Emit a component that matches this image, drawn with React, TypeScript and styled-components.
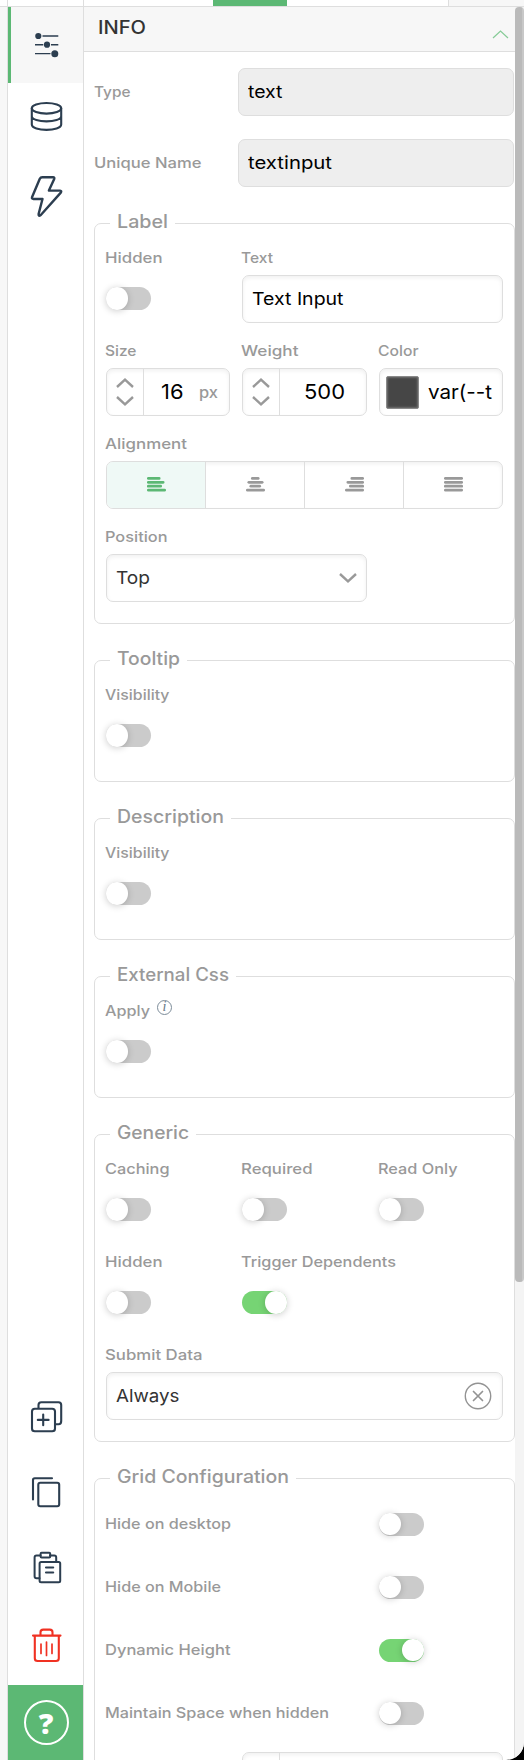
import React, { useLayoutEffect, useRef, useState } from "react";
import styled, { createGlobalStyle } from "styled-components";

const color = {
  line: "#dedede",
  muted: "#999999",
  ink: "#2c3e50",
  green: "#5cb874",
  toggle: "#76d474",
  shade: "#f7f7f7",
  danger: "#f03122",
};

const GlobalStyle = createGlobalStyle`
  *, *::before, *::after { box-sizing: border-box; }
  body { margin: 0; background: #000; font-family: Inter, "Open Sans", sans-serif; }
`;

/* ---------- text ---------- */

const Line = styled.span`
  display: inline-block;
  white-space: pre;
`;

const Glyphs = styled.span`
  display: inline-block;
  transform-origin: left center;
`;

/** A single line of text, widened so that it takes the given width. */
function Tracked({ children, width }: { children: string; width: number }) {
  const ref = useRef<HTMLSpanElement>(null);
  const [stretch, setStretch] = useState(1);
  useLayoutEffect(() => {
    if (ref.current) {
      const natural = parseFloat(getComputedStyle(ref.current).width);
      setStretch(width / natural);
    }
  }, [children, width]);
  return (
    <Line style={{ width }}>
      <Glyphs ref={ref} style={{ transform: `scaleX(${stretch})` }}>
        {children}
      </Glyphs>
    </Line>
  );
}

/* ---------- frame ---------- */

const Shell = styled.div`
  display: flex;
  flex-direction: column;
  width: 524px;
  height: 1760px;
  overflow: hidden;
  background: #fff;
  border-bottom-right-radius: 18px;
`;

const TabStrip = styled.div`
  display: flex;
  flex: none;
  height: 7px;
  border-bottom: 1px solid ${color.line};
`;

const TabPart = styled.div<{ $w: number; $bg?: string; $rule?: boolean }>`
  width: ${(p) => p.$w}px;
  background: ${(p) => p.$bg ?? "#fff"};
  border-right: ${(p) => (p.$rule ? `1px solid ${color.line}` : "0")};
`;

const Body = styled.div`
  display: flex;
  height: 1753px;
`;

const Gutter = styled.div`
  width: 8px;
  background: ${color.shade};
  border-right: 1px solid ${color.line};
`;

const Rail = styled.nav`
  display: flex;
  flex-direction: column;
  width: 76px;
  border-right: 1px solid ${color.line};
`;

const RailItem = styled.button<{ $active?: boolean }>`
  display: block;
  flex: none;
  width: 75px;
  height: 76px;
  padding: 0;
  border: 0;
  background: ${(p) => (p.$active ? color.shade : "transparent")};
  box-shadow: ${(p) => (p.$active ? `inset 3px 0 0 ${color.green}` : "none")};
`;

const RailIcon = styled.svg<{ $danger?: boolean }>`
  display: block;
  width: 75px;
  height: 76px;
  fill: none;
  stroke: ${(p) => (p.$danger ? color.danger : color.ink)};
  stroke-width: 2.1;
  stroke-linecap: round;
  stroke-linejoin: round;
`;

const Spacer = styled.div`
  flex: 1;
`;

const Help = styled.button`
  display: flex;
  flex: none;
  justify-content: center;
  width: 75px;
  height: 75px;
  padding: 15px 0 0 1px;
  border: 0;
  background: ${color.green};
`;

const HelpMark = styled.span`
  display: flex;
  align-items: center;
  justify-content: center;
  width: 45px;
  height: 45px;
  border: 2px solid #fff;
  border-radius: 50%;
  color: #fff;
  font: 800 29px/41px "Open Sans", sans-serif;
`;

const Panel = styled.main`
  width: 431px;
  overflow: hidden;
`;

const PanelHeader = styled.header`
  display: flex;
  justify-content: space-between;
  height: 45px;
  padding: 8px 6px 0 14px;
  border-bottom: 1px solid ${color.line};
  background: ${color.shade};
  color: #333;
  font-size: 18px;
  font-weight: 500;
  line-height: 25px;
`;

const CollapseIcon = styled.svg`
  width: 17px;
  height: 10px;
  margin-top: 14px;
  fill: none;
  stroke: #86cb97;
  stroke-width: 1.2;
`;

const PanelBody = styled.div`
  display: flex;
  flex-direction: column;
  padding: 16px 0 0 10px;
`;

const ScrollTrack = styled.div`
  width: 9px;
  background: #f4f4f4;
`;

const ScrollThumb = styled.div`
  height: 1275px;
  border-radius: 4px;
  background: linear-gradient(to right, #bababa 0 7px, #c8c8c8 7px 9px);
`;

/* ---------- form parts ---------- */

const InfoRows = styled.div`
  display: grid;
  row-gap: 23px;
  margin-bottom: 24px;
`;

const InfoRow = styled.div`
  display: grid;
  grid-template-columns: 144px 276px;
  align-items: center;
  height: 48px;
`;

const LabelText = styled.div`
  display: flex;
  color: ${color.muted};
  font-size: 14.7px;
  font-weight: 500;
  line-height: 20px;
`;

const Group = styled.fieldset<{ $dense?: boolean }>`
  display: block;
  min-width: 0;
  width: 421px;
  margin: 0 0 24px;
  padding: ${(p) => (p.$dense ? "9px 11px 0" : "12px 11px 21px")};
  border: 1px solid ${color.line};
  border-radius: 7px;
`;

const Legend = styled.legend`
  height: 25px;
  margin-left: 4px;
  padding: 0 7px;
  color: ${color.muted};
  font-size: 18px;
  font-weight: 500;
  line-height: 22px;
`;

const Grid = styled.div`
  display: grid;
  grid-template-columns: repeat(3, 1fr);
  column-gap: 12px;
  row-gap: 18px;
`;

const Cell = styled.div<{ $span?: number }>`
  grid-column: span ${(p) => p.$span ?? 1};
  min-width: 0;
`;

const CellLabel = styled(LabelText)`
  height: 27px;
  margin-left: -1px;
`;

const Control = styled.div<{ $disabled?: boolean }>`
  display: flex;
  align-items: center;
  height: 48px;
  overflow: hidden;
  border: 1px solid ${color.line};
  border-radius: 7px;
  background: ${(p) => (p.$disabled ? "#eeeeee" : "#fff")};
  box-shadow: ${(p) => (p.$disabled ? "none" : "inset 0 2px 4px rgba(0, 0, 0, 0.06)")};
`;

const Value = styled.div<{ $size?: number; $tone?: string }>`
  padding-left: 9px;
  color: ${(p) => p.$tone ?? "#000"};
  font-size: ${(p) => p.$size ?? 17.8}px;
  line-height: 24px;
`;

const StepperArrows = styled.div`
  display: flex;
  flex: none;
  flex-direction: column;
  align-items: center;
  justify-content: center;
  gap: 8px;
  width: 37px;
  height: 46px;
  border-right: 1px solid ${color.line};
`;

const Caret = styled.svg<{ $down?: boolean }>`
  flex: none;
  width: 18px;
  height: 10px;
  fill: none;
  stroke: ${color.muted};
  stroke-width: 2.4;
  transform: ${(p) => (p.$down ? "scaleY(-1)" : "none")};
`;

const StepperValue = styled.div`
  flex: 1;
  text-align: center;
  color: #000;
  font-size: 20.5px;
  line-height: 26px;
`;

const Unit = styled.div`
  padding-right: 11px;
  color: ${color.muted};
  font-size: 15px;
  font-weight: 500;
`;

const Swatch = styled.div`
  flex: none;
  width: 33px;
  height: 33px;
  margin: 1px 0 0 6px;
  border: 1px solid #8a8a8a;
  border-radius: 2px;
  background: #464646;
  box-shadow: inset 0 0 2px 1px #6e6e6e;
`;

const Segment = styled.button<{ $active?: boolean }>`
  display: flex;
  flex: 1;
  align-items: center;
  justify-content: center;
  height: 46px;
  padding: 0 0 2px;
  border: 0;
  border-left: 1px solid ${color.line};
  background: ${(p) => (p.$active ? "#eff9f6" : "transparent")};
  color: ${(p) => (p.$active ? color.green : color.muted)};
  &:first-child { border-left: 0; }
`;

const SelectControl = styled(Control)`
  justify-content: space-between;
  padding-right: 9px;
`;

const Track = styled.div<{ $on?: boolean }>`
  display: flex;
  justify-content: ${(p) => (p.$on ? "flex-end" : "flex-start")};
  width: 45px;
  height: 23px;
  border-radius: 12px;
  background: ${(p) => (p.$on ? color.toggle : "#cbcbcb")};
`;

const Knob = styled.div`
  width: 22px;
  height: 22.5px;
  border-radius: 50%;
  background: #fff;
  box-shadow: 0 1px 7px rgba(0, 0, 0, 0.2);
`;

const ToggleSlot = styled.div`
  height: 48px;
  padding-top: 12px;
`;

const SwitchRow = styled.div`
  display: grid;
  grid-template-columns: 273px 1fr;
  align-items: center;
  height: 48px;
  margin-bottom: 15px;
`;

const SwitchLabel = styled(LabelText)`
  margin: 0 0 0 -1px;
`;

const StepperPreview = styled(Control)`
  margin-left: 136px;
`;

const InfoMark = styled.span`
  width: 15px;
  height: 15px;
  margin: -1px 0 0 7px;
  border: 1px solid #7c8c99;
  border-radius: 50%;
  color: #657786;
  font: italic 14px/12px "Liberation Serif", serif;
  text-align: center;
`;

/* ---------- widgets ---------- */

const Toggle = ({ on }: { on?: boolean }) => (
  <Track $on={on}>
    <Knob />
  </Track>
);

const CaretIcon = ({ down }: { down?: boolean }) => (
  <Caret $down={down} viewBox="0 0 18 10">
    <path d="M1 9 9 1.7 17 9" />
  </Caret>
);

function ToggleCell(props: { label: string; width: number; on?: boolean; span?: number; info?: boolean }) {
  return (
    <Cell $span={props.span}>
      <CellLabel>
        <Tracked width={props.width}>{props.label}</Tracked>
        {props.info && <InfoMark>i</InfoMark>}
      </CellLabel>
      <ToggleSlot>
        <Toggle on={props.on} />
      </ToggleSlot>
    </Cell>
  );
}

function FieldCell(props: { label: string; width: number; span?: number; children: React.ReactNode }) {
  return (
    <Cell $span={props.span}>
      <CellLabel>
        <Tracked width={props.width}>{props.label}</Tracked>
      </CellLabel>
      {props.children}
    </Cell>
  );
}

const Arrows = () => (
  <StepperArrows>
    <CaretIcon />
    <CaretIcon down />
  </StepperArrows>
);

function AlignIcon({ rows }: { rows: [number, number][] }) {
  return (
    <svg width="19" height="15" viewBox="0 0 19 15" stroke="currentColor" strokeWidth="2.7" strokeLinecap="round">
      {rows.map(([from, to], i) => (
        <path key={i} d={`M${from + 1.3} ${1.4 + i * 3.9}H${to - 1.3}`} />
      ))}
    </svg>
  );
}

const alignments: [number, number][][] = [
  [[0, 13.5], [0, 17.5], [0, 15], [0, 19]],
  [[5, 13.5], [1.5, 17.5], [3.5, 15], [0, 19]],
  [[5.5, 19], [1.5, 19], [4, 19], [0, 19]],
  [[0, 19], [0, 19], [0, 19], [0, 19]],
];

const gridSwitches = [
  { label: "Hide on desktop", width: 126, on: false },
  { label: "Hide on Mobile", width: 116, on: false },
  { label: "Dynamic Height", width: 125.5, on: true },
  { label: "Maintain Space when hidden", width: 224, on: false },
];

/* ---------- rail ---------- */

function SideRail() {
  return (
    <Rail>
      <RailItem $active>
        <RailIcon viewBox="8 7 75 76">
          <path strokeWidth="1.4" strokeLinecap="butt" d="M42.5 36H58.3M35 44.8H43.3M51 44.8H58.3M35 53.6H50.5" />
          <g fill={color.ink} stroke="none">
            <circle cx="38.3" cy="36" r="3.1" />
            <circle cx="47" cy="44.7" r="3.1" />
            <circle cx="54.8" cy="53.7" r="3.5" />
          </g>
        </RailIcon>
      </RailItem>
      <RailItem>
        <RailIcon viewBox="8 83 75 76">
          <ellipse cx="46.5" cy="108.3" rx="14.7" ry="5.3" />
          <path d="M31.8 108.3V124.5C31.8 131.6 61.2 131.6 61.2 124.5V108.3M31.8 116.3C31.8 123 61.2 123 61.2 116.3" />
        </RailIcon>
      </RailItem>
      <RailItem>
        <RailIcon viewBox="8 159 75 76">
          <path
            strokeWidth="2.4"
            d="M42.2 177.2H53Q54.8 177.4 54.2 179L48.9 190.6H60Q62 190.9 60.8 192.6L40.8 215Q38.2 216.8 38.6 214L42.5 199H33.5Q31.5 198.8 32 197.3L39.8 178.8Q40.6 177.2 42.2 177.2Z"
          />
        </RailIcon>
      </RailItem>
      <Spacer />
      <RailItem>
        <RailIcon viewBox="8 1381 75 76">
          <rect x="32" y="1408.8" width="23" height="22.4" rx="2.8" />
          <path d="M38.5 1408V1405Q38.5 1402.2 41.3 1402.2H58.5Q61.2 1402.2 61.2 1405V1421Q61.2 1424.3 58.5 1424.3H55.5M43.2 1414.5V1425.3M37.8 1419.9H48.6" />
        </RailIcon>
      </RailItem>
      <RailItem>
        <RailIcon viewBox="8 1457 75 76">
          <rect x="38.3" y="1482.8" width="20.9" height="23.5" rx="2" />
          <path d="M33 1499.5V1480Q33 1478.2 34.8 1478.2H52" />
        </RailIcon>
      </RailItem>
      <RailItem>
        <RailIcon viewBox="8 1533 75 76">
          <path strokeWidth="2" d="M39.5 1578.2H36.5Q34.6 1578.2 34.6 1576.3V1557.5Q34.6 1555.6 36.5 1555.6H40.5M50 1555.6H54.3Q56.2 1555.6 56.2 1557.5V1561.5" />
          <rect strokeWidth="2" x="40.6" y="1552.8" width="9.6" height="4.8" rx="1" />
          <rect strokeWidth="2" x="39.6" y="1562" width="20.6" height="20.2" rx="1.5" />
          <path d="M46 1567.5H53.2M46 1572.5H53.2" />
        </RailIcon>
      </RailItem>
      <RailItem>
        <RailIcon $danger viewBox="8 1609 75 76">
          <path d="M33 1635.6H60.5M40.5 1635V1632.3Q40.5 1629.6 43.2 1629.6H49.8Q52.5 1629.6 52.5 1632.3V1635M34.8 1636V1658.2Q34.8 1661 37.6 1661H56Q58.8 1661 58.8 1658.2V1636" />
          <path strokeWidth="1.7" d="M41 1644V1653.5M46.5 1642V1655.5M52 1644V1653.5" />
        </RailIcon>
      </RailItem>
      <Help>
        <HelpMark>?</HelpMark>
      </Help>
    </Rail>
  );
}

/* ---------- page ---------- */

export default function App() {
  return (
    <Shell>
      <GlobalStyle />
      <TabStrip>
        <TabPart $w={8} $rule />
        <TabPart $w={76} $rule />
        <TabPart $w={129} />
        <TabPart $w={74} $bg={color.green} />
        <TabPart $w={162} $rule />
        <TabPart $w={75} $bg={color.shade} />
      </TabStrip>
      <Body>
        <Gutter />
        <SideRail />
        <Panel>
          <PanelHeader>
            <Tracked width={48}>INFO</Tracked>
            <CollapseIcon viewBox="0 0 17 10">
              <path d="M1 9 8.5 2 16 9" />
            </CollapseIcon>
          </PanelHeader>
          <PanelBody>
            <InfoRows>
              <InfoRow>
                <LabelText>
                  <Tracked width={36.5}>Type</Tracked>
                </LabelText>
                <Control $disabled>
                  <Value>
                    <Tracked width={34.5}>text</Tracked>
                  </Value>
                </Control>
              </InfoRow>
              <InfoRow>
                <LabelText>
                  <Tracked width={107.5}>Unique Name</Tracked>
                </LabelText>
                <Control $disabled>
                  <Value>
                    <Tracked width={84}>textinput</Tracked>
                  </Value>
                </Control>
              </InfoRow>
            </InfoRows>

            <Group>
              <Legend>
                <Tracked width={51}>Label</Tracked>
              </Legend>
              <Grid>
                <ToggleCell label="Hidden" width={57.5} />
                <FieldCell label="Text" width={32} span={2}>
                  <Control>
                    <Value>
                      <Tracked width={91.5}>Text Input</Tracked>
                    </Value>
                  </Control>
                </FieldCell>
                <FieldCell label="Size" width={31.5}>
                  <Control>
                    <Arrows />
                    <StepperValue>
                      <Tracked width={22.5}>16</Tracked>
                    </StepperValue>
                    <Unit>
                      <Tracked width={19}>px</Tracked>
                    </Unit>
                  </Control>
                </FieldCell>
                <FieldCell label="Weight" width={57.5}>
                  <Control>
                    <Arrows />
                    <StepperValue>
                      <Tracked width={41}>500</Tracked>
                    </StepperValue>
                  </Control>
                </FieldCell>
                <FieldCell label="Color" width={40.5}>
                  <Control>
                    <Swatch />
                    <Value $size={20}>
                      <Tracked width={64}>var(--t</Tracked>
                    </Value>
                  </Control>
                </FieldCell>
                <FieldCell label="Alignment" width={82} span={3}>
                  <Control>
                    {alignments.map((rows, i) => (
                      <Segment key={i} $active={i === 0}>
                        <AlignIcon rows={rows} />
                      </Segment>
                    ))}
                  </Control>
                </FieldCell>
                <FieldCell label="Position" width={62.5} span={2}>
                  <SelectControl>
                    <Value $tone="#333">
                      <Tracked width={34}>Top</Tracked>
                    </Value>
                    <CaretIcon down />
                  </SelectControl>
                </FieldCell>
              </Grid>
            </Group>

            <Group>
              <Legend>
                <Tracked width={63}>Tooltip</Tracked>
              </Legend>
              <Grid>
                <ToggleCell label="Visibility" width={64.5} />
              </Grid>
            </Group>

            <Group>
              <Legend>
                <Tracked width={107}>Description</Tracked>
              </Legend>
              <Grid>
                <ToggleCell label="Visibility" width={64.5} />
              </Grid>
            </Group>

            <Group>
              <Legend>
                <Tracked width={112}>External Css</Tracked>
              </Legend>
              <Grid>
                <ToggleCell label="Apply" width={45} info />
              </Grid>
            </Group>

            <Group>
              <Legend>
                <Tracked width={72}>Generic</Tracked>
              </Legend>
              <Grid>
                <ToggleCell label="Caching" width={64.5} />
                <ToggleCell label="Required" width={71.5} />
                <ToggleCell label="Read Only" width={79.5} />
                <ToggleCell label="Hidden" width={57.5} />
                <ToggleCell label="Trigger Dependents" width={155} span={2} on />
                <FieldCell label="Submit Data" width={97.5} span={3}>
                  <SelectControl>
                    <Value $tone="#333">
                      <Tracked width={63.5}>Always</Tracked>
                    </Value>
                    <svg width="30" height="30" viewBox="0 0 30 30" fill="none" stroke="#939393" strokeWidth="1.4">
                      <circle cx="15" cy="15" r="12.7" />
                      <path strokeWidth="1.7" strokeLinecap="round" d="M10.5 10.5 19.5 19.5M19.5 10.5 10.5 19.5" />
                    </svg>
                  </SelectControl>
                </FieldCell>
              </Grid>
            </Group>

            <Group $dense>
              <Legend>
                <Tracked width={172}>Grid Configuration</Tracked>
              </Legend>
              {gridSwitches.map((s) => (
                <SwitchRow key={s.label}>
                  <SwitchLabel>
                    <Tracked width={s.width}>{s.label}</Tracked>
                  </SwitchLabel>
                  <Toggle on={s.on} />
                </SwitchRow>
              ))}
              <StepperPreview>
                <Arrows />
              </StepperPreview>
            </Group>
          </PanelBody>
        </Panel>
        <ScrollTrack>
          <ScrollThumb />
        </ScrollTrack>
      </Body>
    </Shell>
  );
}
